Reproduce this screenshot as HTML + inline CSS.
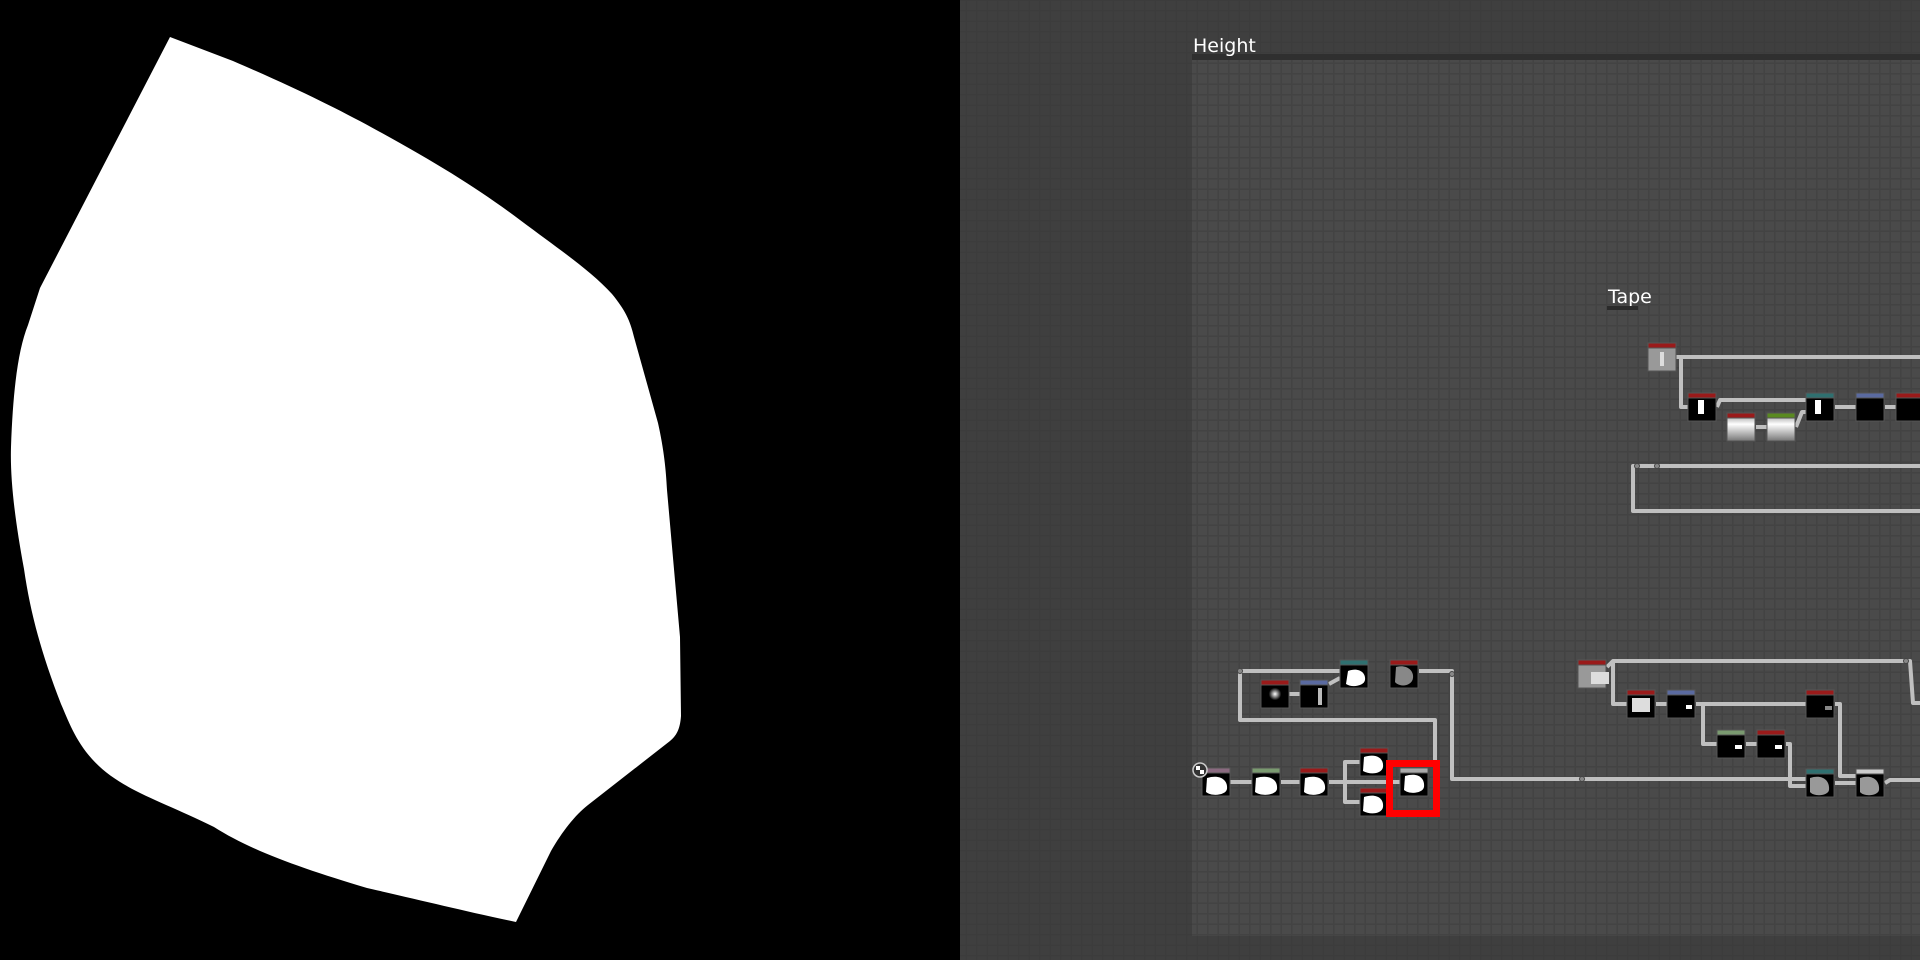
<!DOCTYPE html>
<html><head><meta charset="utf-8"><style>
html,body{margin:0;padding:0;width:1920px;height:960px;overflow:hidden;background:#000}
svg{display:block}
text{font-family:"DejaVu Sans","Liberation Sans",sans-serif;fill:#fff}
</style></head><body>
<svg width="1920" height="960" viewBox="0 0 1920 960" xmlns="http://www.w3.org/2000/svg">
<defs>
<pattern id="g" width="10.5" height="10.5" patternUnits="userSpaceOnUse">
<rect width="10.5" height="10.5" fill="#3c3c3c"/>
<rect width="9" height="9" x="1" y="1" fill="#3f3f3f"/>
</pattern>
<pattern id="g2" width="10.5" height="10.5" patternUnits="userSpaceOnUse">
<rect width="10.5" height="10.5" fill="#434343"/>
<rect width="9" height="9" x="1" y="1" fill="#4a4a4a"/>
</pattern>
<linearGradient id="wg" x1="0" y1="0" x2="0" y2="1"><stop offset="0" stop-color="#888"/><stop offset="0.4" stop-color="#fff"/><stop offset="1" stop-color="#777"/></linearGradient>
<radialGradient id="glow"><stop offset="0" stop-color="#fff"/><stop offset="0.15" stop-color="#aaa"/><stop offset="0.45" stop-color="#000"/><stop offset="1" stop-color="#000"/></radialGradient>
</defs>
<rect x="0" y="0" width="960" height="960" fill="#000"/>
<path fill="#fff" d="M170,37 L233,61 C300,90 340,110 380,132 C440,165 480,190 520,220 C560,250 590,270 612,294 C625,310 630,320 634,337 L658,423 C664,450 666,470 667,490 L680,637 L681,716 C680,730 676,736 670,741 L588,805 C575,815 562,832 551,851 L516,922 C460,910 420,900 367,888 C300,868 250,850 214,827 C160,800 120,790 92,759 C75,740 68,720 61,704 C40,650 30,610 24,569 C15,520 10,480 11,447 C13,390 18,350 28,325 L40,288 Z"/>
<rect x="960" y="0" width="960" height="960" fill="url(#g)"/>
<rect x="1192" y="60" width="728" height="876" fill="url(#g2)"/>
<rect x="1192" y="54" width="728" height="6" fill="#2f2f2f"/>
<text x="1193" y="52" font-size="19">Height</text>
<text x="1608" y="303" font-size="19">Tape</text>
<rect x="1607" y="306" width="31" height="4" fill="#2a2a2a"/>
<g fill="none" stroke="#c0c0c0" stroke-width="4" stroke-linejoin="round">
<path d="M1340,671 L1240,671 L1240,720 L1435,720 L1435,781"/>
<path d="M1419,671 L1452,671 L1452,779 L1806,779"/>
<path d="M1289,694 L1300,694 M1329,684 L1340,678"/>
<path d="M1230,782 L1252,782 M1281,782 L1300,782"/>
<path d="M1329,782 L1400,782 M1345,782 L1345,762 L1360,762 M1345,782 L1345,802 L1360,802"/>
<path d="M1676,357 L1920,357 M1681,357 L1681,407 L1688,407"/>
<path d="M1717,407 L1720,400 L1806,400 M1756,427 L1767,427 M1796,427 L1802,412 L1806,412"/>
<path d="M1835,407 L1856,407 M1885,407 L1896,407"/>
<path d="M1920,466 L1633,466 L1633,511 L1920,511"/>
<path d="M1607,667 L1613,661 L1910,661 L1913,703 L1920,703 M1613,661 L1613,704 L1627,704"/>
<path d="M1656,704 L1667,704 M1696,704 L1806,704 M1703,704 L1703,744 L1717,744 M1746,744 L1757,744"/>
<path d="M1786,744 L1790,744 L1790,786 L1806,786 M1835,704 L1840,704 L1840,776 L1856,776"/>
<path d="M1835,783 L1856,783 M1885,783 L1890,780 L1920,780"/>
</g>
<g stroke="#555" stroke-width="1">
<rect x="1261" y="680" width="28" height="28" fill="url(#glow)"/><rect x="1261" y="680" width="28" height="5" fill="#9a1a1a"/>
<rect x="1300" y="680" width="28" height="28" fill="#000"/><rect x="1300" y="680" width="28" height="5" fill="#5a6aa0"/>
<rect x="1340" y="660" width="28" height="28" fill="#000"/><rect x="1340" y="660" width="28" height="5" fill="#2f7070"/>
<rect x="1390" y="660" width="28" height="28" fill="#000"/><rect x="1390" y="660" width="28" height="5" fill="#9a1a1a"/>
<rect x="1202" y="768" width="28" height="28" fill="#000"/><rect x="1202" y="768" width="28" height="5" fill="#8a6a80"/>
<rect x="1252" y="768" width="28" height="28" fill="#000"/><rect x="1252" y="768" width="28" height="5" fill="#7a9a70"/>
<rect x="1300" y="768" width="28" height="28" fill="#000"/><rect x="1300" y="768" width="28" height="5" fill="#9a1a1a"/>
<rect x="1360" y="748" width="28" height="28" fill="#000"/><rect x="1360" y="748" width="28" height="5" fill="#9a1a1a"/>
<rect x="1360" y="788" width="28" height="28" fill="#000"/><rect x="1360" y="788" width="28" height="5" fill="#9a1a1a"/>
<rect x="1400" y="768" width="28" height="28" fill="#000"/><rect x="1400" y="768" width="28" height="5" fill="#aaa"/>
<rect x="1648" y="343" width="28" height="28" fill="#999"/><rect x="1648" y="343" width="28" height="5" fill="#9a1a1a"/>
<rect x="1688" y="393" width="28" height="28" fill="#000"/><rect x="1688" y="393" width="28" height="5" fill="#9a1a1a"/>
<rect x="1727" y="413" width="28" height="28" fill="url(#wg)"/><rect x="1727" y="413" width="28" height="5" fill="#9a1a1a"/>
<rect x="1767" y="413" width="28" height="28" fill="url(#wg)"/><rect x="1767" y="413" width="28" height="5" fill="#5a8a20"/>
<rect x="1806" y="393" width="28" height="28" fill="#000"/><rect x="1806" y="393" width="28" height="5" fill="#2f7070"/>
<rect x="1856" y="393" width="28" height="28" fill="#000"/><rect x="1856" y="393" width="28" height="5" fill="#5a6aa0"/>
<rect x="1896" y="393" width="28" height="28" fill="#000"/><rect x="1896" y="393" width="28" height="5" fill="#9a1a1a"/>
<rect x="1578" y="660" width="28" height="28" fill="#999"/><rect x="1578" y="660" width="28" height="5" fill="#9a1a1a"/>
<rect x="1627" y="690" width="28" height="28" fill="#000"/><rect x="1627" y="690" width="28" height="5" fill="#9a1a1a"/>
<rect x="1667" y="690" width="28" height="28" fill="#000"/><rect x="1667" y="690" width="28" height="5" fill="#5a6aa0"/>
<rect x="1806" y="690" width="28" height="28" fill="#000"/><rect x="1806" y="690" width="28" height="5" fill="#9a1a1a"/>
<rect x="1717" y="730" width="28" height="28" fill="#000"/><rect x="1717" y="730" width="28" height="5" fill="#7a9a70"/>
<rect x="1757" y="730" width="28" height="28" fill="#000"/><rect x="1757" y="730" width="28" height="5" fill="#9a1a1a"/>
<rect x="1806" y="769" width="28" height="28" fill="#000"/><rect x="1806" y="769" width="28" height="5" fill="#2f7070"/>
<rect x="1856" y="769" width="28" height="28" fill="#000"/><rect x="1856" y="769" width="28" height="5" fill="#ccc"/>
</g>
<g fill="#fff">
<path d="M1348,671 C1358,667 1366,672 1365,680 C1364,686 1352,688 1346,684 Z"/>
<path fill="#888" d="M1396,667 C1406,664 1414,670 1413,678 C1412,686 1400,688 1395,682 Z"/>
<rect x="1318" y="688" width="4" height="17" fill="#bbb"/>
<path d="M1207,778 C1220,774 1228,780 1227,789 C1226,795 1212,797 1206,792 Z"/>
<path d="M1256,778 C1270,774 1278,780 1277,789 C1276,795 1262,797 1255,792 Z"/>
<path d="M1305,778 C1318,774 1326,780 1325,789 C1324,795 1310,797 1304,792 Z"/>
<path d="M1364,757 C1376,753 1384,758 1383,767 C1382,774 1370,775 1363,771 Z"/>
<path d="M1364,797 C1376,793 1384,798 1383,807 C1382,814 1370,815 1363,811 Z"/>
<path d="M1405,776 C1418,772 1425,778 1424,787 C1423,793 1410,795 1404,790 Z"/>
<rect x="1660" y="352" width="4" height="14" fill="#ddd"/>
<rect x="1698" y="400" width="6" height="14"/>
<rect x="1815" y="400" width="6" height="14"/>
<rect x="1591" y="672" width="18" height="12" fill="#ddd"/>
<rect x="1632" y="698" width="18" height="14" fill="#ddd"/>
<rect x="1686" y="705" width="6" height="4"/>
<rect x="1825" y="706" width="7" height="4" fill="#888"/>
<rect x="1735" y="745" width="7" height="4"/>
<rect x="1775" y="745" width="7" height="4"/>
<path fill="#999" d="M1810,778 C1822,774 1830,780 1829,790 C1828,796 1814,797 1810,792 Z"/>
<path fill="#999" d="M1860,778 C1872,774 1880,780 1879,790 C1878,796 1864,797 1860,792 Z"/>
</g>
<g fill="#888" stroke="#444" stroke-width="1">
<circle cx="1240" cy="671" r="2.5"/><circle cx="1452" cy="674" r="2.5"/><circle cx="1582" cy="779" r="2.5"/>
<circle cx="1637" cy="466" r="2.5"/><circle cx="1657" cy="466" r="2.5"/><circle cx="1906" cy="661" r="2.5"/>
</g>
<circle cx="1200" cy="770" r="7" fill="#333" stroke="#ccc" stroke-width="1.5"/>
<rect x="1196" y="766" width="4" height="4" fill="#fff"/><rect x="1200" y="770" width="4" height="4" fill="#fff"/>
<rect x="1389.5" y="763.5" width="47" height="50" fill="none" stroke="#f00" stroke-width="7"/>
</svg>
</body></html>
